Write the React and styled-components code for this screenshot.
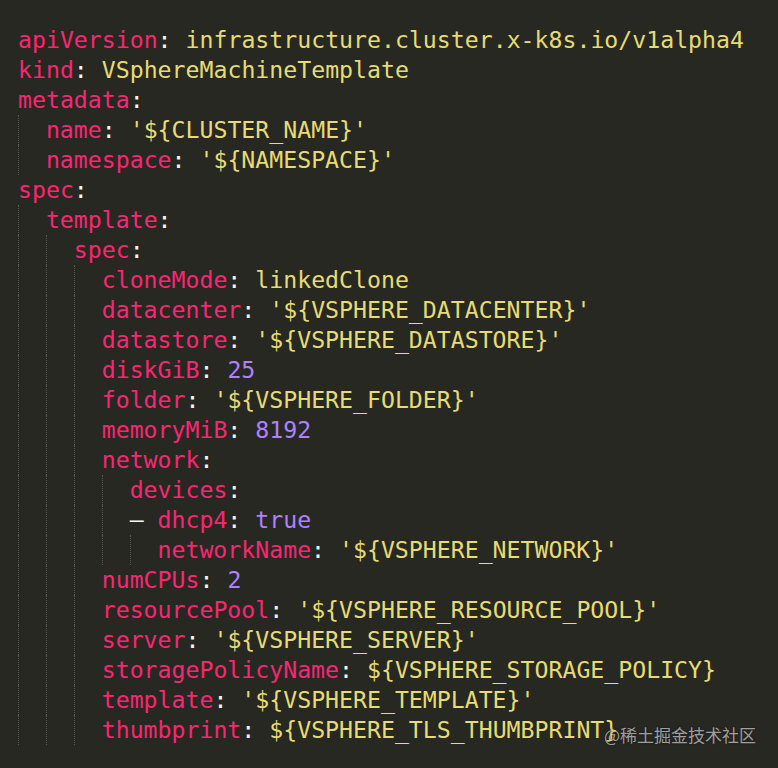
import styled, { createGlobalStyle } from 'styled-components';

const GlobalStyle = createGlobalStyle`
  html, body {
    margin: 0;
    padding: 0;
    background: #272822;
  }
`;

const Editor = styled.div`
  position: relative;
  width: 778px;
  height: 768px;
  box-sizing: border-box;
  padding: 25px 0 0 18px;
  background: #272822;
  font-family: 'DejaVu Sans Mono', 'Liberation Mono', monospace;
  font-size: 23.2px;
  overflow: hidden;
`;

const Line = styled.div`
  display: flex;
  align-items: center;
  height: 30px;
  line-height: 30px;
  white-space: pre;
  color: #f8f8f2;
`;

const Guide = styled.span`
  display: inline-block;
  width: 2ch;
  height: 30px;
  box-sizing: border-box;
  border-left: 1px dotted rgba(255, 255, 255, 0.22);
`;

const Key = styled.span`
  color: #f92672;
`;

const Punct = styled.span`
  color: #f8f8f2;
`;

const Value = styled.span`
  color: ${({ $kind }) => ($kind === 'const' ? '#ae81ff' : '#e6db74')};
`;

const Watermark = styled.div`
  position: absolute;
  right: 22px;
  bottom: 21px;
  font-family: 'Noto Sans CJK SC', 'Noto Sans', sans-serif;
  font-size: 17px;
  color: rgba(220, 220, 220, 0.7);
  text-shadow: 0 0 2px rgba(0, 0, 0, 0.5);
`;

const lines = [
  { i: 0, k: 'apiVersion', v: 'infrastructure.cluster.x-k8s.io/v1alpha4' },
  { i: 0, k: 'kind', v: 'VSphereMachineTemplate' },
  { i: 0, k: 'metadata' },
  { i: 1, k: 'name', v: "'${CLUSTER_NAME}'" },
  { i: 1, k: 'namespace', v: "'${NAMESPACE}'" },
  { i: 0, k: 'spec' },
  { i: 1, k: 'template' },
  { i: 2, k: 'spec' },
  { i: 3, k: 'cloneMode', v: 'linkedClone' },
  { i: 3, k: 'datacenter', v: "'${VSPHERE_DATACENTER}'" },
  { i: 3, k: 'datastore', v: "'${VSPHERE_DATASTORE}'" },
  { i: 3, k: 'diskGiB', v: '25', c: true },
  { i: 3, k: 'folder', v: "'${VSPHERE_FOLDER}'" },
  { i: 3, k: 'memoryMiB', v: '8192', c: true },
  { i: 3, k: 'network' },
  { i: 4, k: 'devices' },
  { i: 4, k: 'dhcp4', v: 'true', c: true, dash: true },
  { i: 5, k: 'networkName', v: "'${VSPHERE_NETWORK}'" },
  { i: 3, k: 'numCPUs', v: '2', c: true },
  { i: 3, k: 'resourcePool', v: "'${VSPHERE_RESOURCE_POOL}'" },
  { i: 3, k: 'server', v: "'${VSPHERE_SERVER}'" },
  { i: 3, k: 'storagePolicyName', v: '${VSPHERE_STORAGE_POLICY}' },
  { i: 3, k: 'template', v: "'${VSPHERE_TEMPLATE}'" },
  { i: 3, k: 'thumbprint', v: '${VSPHERE_TLS_THUMBPRINT}' },
];

const App = () => (
  <Editor>
    <GlobalStyle />
    {lines.map((l, n) => (
      <Line key={n}>
        {Array.from({ length: l.i }).map((_, g) => (
          <Guide key={g} />
        ))}
        {l.dash && <Punct>{'\u2013 '}</Punct>}
        <Key>{l.k}</Key>
        <Punct>:</Punct>
        {l.v && (
          <>
            <Punct> </Punct>
            <Value $kind={l.c ? 'const' : 'str'}>{l.v}</Value>
          </>
        )}
      </Line>
    ))}
    <Watermark>@稀土掘金技术社区</Watermark>
  </Editor>
);

export default App;
